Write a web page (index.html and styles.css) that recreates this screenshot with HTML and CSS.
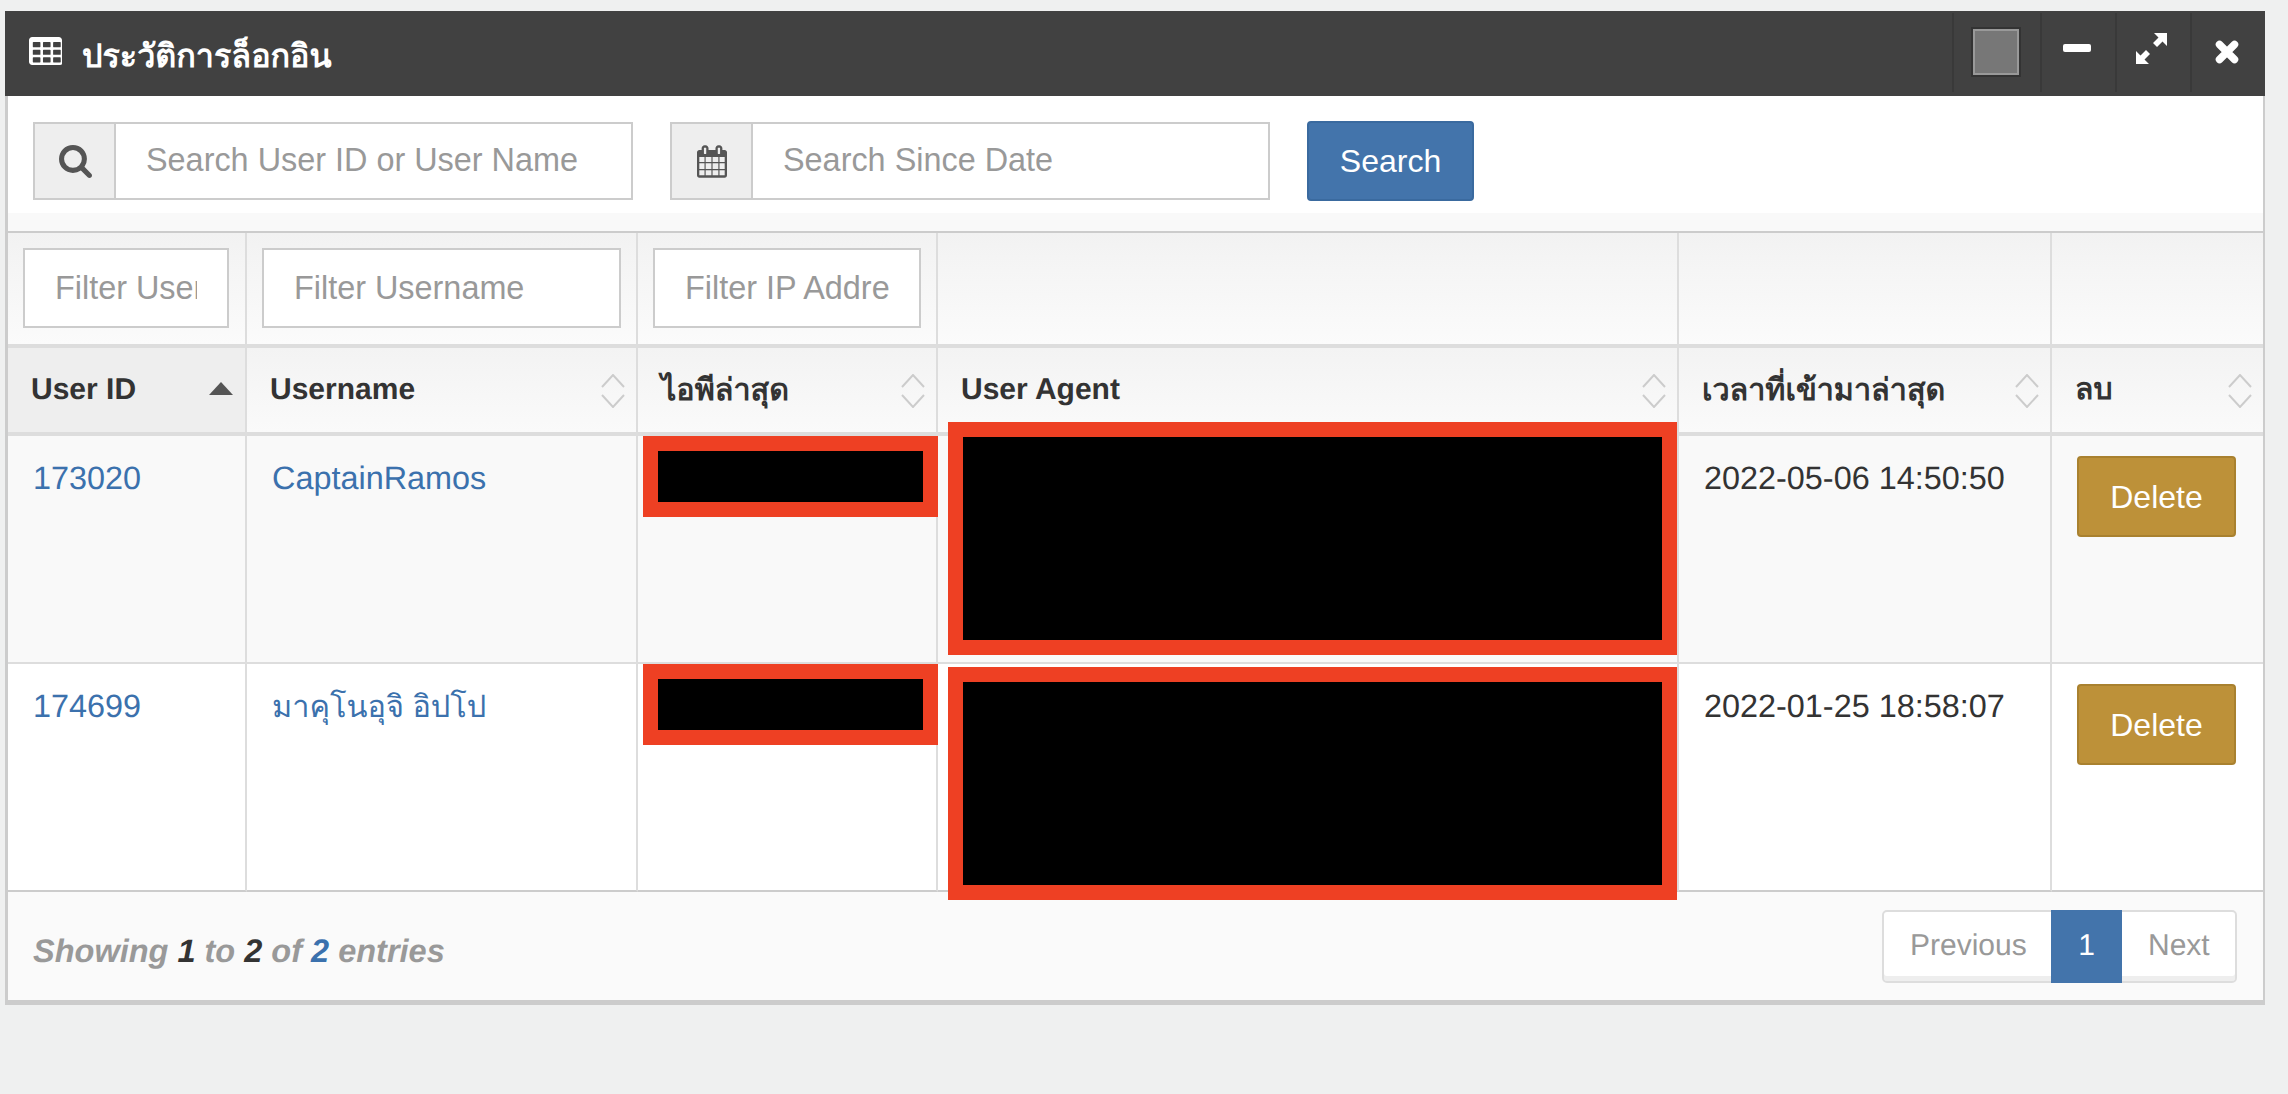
FILE: index.html
```html
<!DOCTYPE html>
<html lang="th">
<head>
<meta charset="utf-8">
<title>ประวัติการล็อกอิน</title>
<link rel="stylesheet" href="styles.css">
</head>
<body>
<section class="window">
  <header class="titlebar">
    <svg class="title-icon" viewBox="0 128 1664 1408"><path d="M576 1376v-192q0-14-9-23t-23-9H224q-14 0-23 9t-9 23v192q0 14 9 23t23 9h320q14 0 23-9t9-23zm0-384V800q0-14-9-23t-23-9H224q-14 0-23 9t-9 23v192q0 14 9 23t23 9h320q14 0 23-9t9-23zm512 384v-192q0-14-9-23t-23-9H736q-14 0-23 9t-9 23v192q0 14 9 23t23 9h320q14 0 23-9t9-23zM576 608V416q0-14-9-23t-23-9H224q-14 0-23 9t-9 23v192q0 14 9 23t23 9h320q14 0 23-9t9-23zm512 384V800q0-14-9-23t-23-9H736q-14 0-23 9t-9 23v192q0 14 9 23t23 9h320q14 0 23-9t9-23zm512 384v-192q0-14-9-23t-23-9h-320q-14 0-23 9t-9 23v192q0 14 9 23t23 9h320q14 0 23-9t9-23zm-512-768V416q0-14-9-23t-23-9H736q-14 0-23 9t-9 23v192q0 14 9 23t23 9h320q14 0 23-9t9-23zm512 384V800q0-14-9-23t-23-9h-320q-14 0-23 9t-9 23v192q0 14 9 23t23 9h320q14 0 23-9t9-23zm0-384V416q0-14-9-23t-23-9h-320q-14 0-23 9t-9 23v192q0 14 9 23t23 9h320q14 0 23-9t9-23zm128-320v1088q0 66-47 113t-113 47H160q-66 0-113-47T0 1376V288q0-66 47-113t113-47h1344q66 0 113 47t47 113z"/></svg>
    <h1 class="title">ประวัติการล็อกอิน</h1>
    <div class="tools">
      <div class="tool tool-swatch"><span class="swatch"></span></div>
      <div class="tool"><svg class="ic-min" viewBox="0 0 28 8"><rect width="28" height="8" rx="2"/></svg></div>
      <div class="tool"><svg class="ic-exp" viewBox="0 0 31 31"><path d="M18 0h13v13l-4.500-4.500L21 14l-4-4 5.500-5.500zM0 31V18l4.500 4.500L10 17l4 4-5.500 5.500L13 31z"/></svg></div>
      <div class="tool"><svg class="ic-close" viewBox="0 0 24 24"><path d="M4.500 4.500l15 15M19.500 4.500l-15 15"/></svg></div>
    </div>
  </header>
  <div class="content">
    <form class="toolbar">
      <div class="field">
        <span class="addon"><svg class="ic-search" viewBox="0 0 1664 1664"><path d="M1152 704q0-185-131.500-316.500T704 256 387.500 387.500 256 704t131.500 316.500T704 1152t316.500-131.500T1152 704zm512 832q0 52-38 90t-90 38q-54 0-90-38l-343-342q-179 124-399 124-143 0-273.500-55.500t-225-150-150-225T0 704t55.500-273.500 150-225 225-150T704 0t273.500 55.500 225 150 150 225T1408 704q0 220-124 399l343 343q37 37 37 90z"/></svg></span>
        <input class="field-input" placeholder="Search User ID or User Name">
      </div>
      <div class="field">
        <span class="addon"><svg class="ic-cal" viewBox="0 0 1664 1792"><path d="M128 1664h288v-288H128v288zm352 0h320v-288H480v288zm-352-352h288V992H128v320zm352 0h320V992H480v320zM128 928h288V640H128v288zm736 736h320v-288H864v288zM480 928h320V640H480v288zm768 736h288v-288h-288v288zm-384-352h320V992H864v320zM512 448V160q0-13-9.500-22.500T480 128h-64q-13 0-22.500 9.500T384 160v288q0 13 9.500 22.500T416 480h64q13 0 22.500-9.500T512 448zm736 864h288V992h-288v320zM864 928h320V640H864v288zm384 0h288V640h-288v288zm32-480V160q0-13-9.500-22.500T1248 128h-64q-13 0-22.500 9.500T1152 160v288q0 13 9.500 22.500t22.500 9.500h64q13 0 22.500-9.500t9.500-22.500zm384-64v1280q0 52-38 90t-90 38H128q-52 0-90-38t-38-90V384q0-52 38-90t90-38h128v-96q0-66 47-113T416 0h64q66 0 113 47t47 113v96h384v-96q0-66 47-113t113-47h64q66 0 113 47t47 113v96h128q52 0 90 38t38 90z"/></svg></span>
        <input class="field-input" placeholder="Search Since Date">
      </div>
      <button class="btn btn-search" type="button">Search</button>
    </form>
    <div class="strip"></div>
    <table class="grid">
      <colgroup>
        <col class="c1"><col class="c2"><col class="c3"><col class="c4"><col class="c5"><col class="c6">
      </colgroup>
      <thead>
        <tr class="filters">
          <td><input class="filter" placeholder="Filter User ID"></td>
          <td><input class="filter" placeholder="Filter Username"></td>
          <td><input class="filter" placeholder="Filter IP Address"></td>
          <td></td><td></td><td></td>
        </tr>
        <tr class="heads">
          <th class="sorted"><span>User ID</span><svg class="sort" viewBox="0 0 24 14"><path class="tri" d="M12 0l12 13H0z"/></svg></th>
          <th><span>Username</span><svg class="sort" viewBox="0 0 24 34"><path d="M1 13L12 1l11 12M1 21l11 12 11-12"/></svg></th>
          <th><span class="thai">ไอพีล่าสุด</span><svg class="sort" viewBox="0 0 24 34"><path d="M1 13L12 1l11 12M1 21l11 12 11-12"/></svg></th>
          <th><span>User Agent</span><svg class="sort" viewBox="0 0 24 34"><path d="M1 13L12 1l11 12M1 21l11 12 11-12"/></svg></th>
          <th><span class="thai">เวลาที่เข้ามาล่าสุด</span><svg class="sort" viewBox="0 0 24 34"><path d="M1 13L12 1l11 12M1 21l11 12 11-12"/></svg></th>
          <th><span>ลบ</span><svg class="sort" viewBox="0 0 24 34"><path d="M1 13L12 1l11 12M1 21l11 12 11-12"/></svg></th>
        </tr>
      </thead>
      <tbody>
        <tr class="odd">
          <td><a href="#">173020</a></td>
          <td><a href="#">CaptainRamos</a></td>
          <td class="masked"><i class="mask mask-ip mask-ip-a"></i></td>
          <td class="masked"><i class="mask mask-ua mask-ua-a"></i></td>
          <td>2022-05-06 14:50:50</td>
          <td class="act"><button class="btn btn-del" type="button">Delete</button></td>
        </tr>
        <tr>
          <td><a href="#">174699</a></td>
          <td><a href="#" class="thai-link">มาคุโนอุจิ อิปโป</a></td>
          <td class="masked"><i class="mask mask-ip mask-ip-b"></i></td>
          <td class="masked"><i class="mask mask-ua mask-ua-b"></i></td>
          <td>2022-01-25 18:58:07</td>
          <td class="act"><button class="btn btn-del" type="button">Delete</button></td>
        </tr>
      </tbody>
    </table>
    <footer class="foot">
      <p class="info">Showing <b>1</b> to <b>2</b> of <b class="total">2</b> entries</p>
      <nav class="pager">
        <a href="#" class="prev">Previous</a><a href="#" class="on">1</a><a href="#" class="next">Next</a>
      </nav>
    </footer>
  </div>
</section>
</body>
</html>
```
FILE: styles.css
```css
* { box-sizing: border-box; }
html, body { margin: 0; height: 100%; }
body {
  background: #eff0f0;
  font-family: "Liberation Sans", "Noto Sans", sans-serif;
  font-size: 32px;
  color: #333;
  overflow: hidden;
  text-rendering: geometricPrecision;
}
.window { width: 2260px; margin: 11px 0 0 5px; }

.titlebar { height: 85px; background: #414141; display: flex; align-items: center; color: #fff; }
.title-icon { width: 33px; height: 28px; margin: 0 0 5px 24px; fill: #fff; flex: none; }
.title { margin: 5px 0 0 20px; font-size: 32.300px; font-weight: 700; line-height: 1; }
.tools { margin-left: auto; display: flex; align-self: stretch; padding: 2px 0 4px; }
.tool { width: 75px; display: flex; align-items: center; justify-content: center; border-left: 2px solid #393939; }
.tool-swatch { width: 88px; }
.swatch { width: 46px; height: 46px; background: #777; border: 2px solid #999; outline: 2px solid #333; margin: -1px 0 0 -3px; }
.ic-min { width: 28px; height: 8px; fill: #fff; margin: -10px 0 0 -4px; }
.ic-exp { width: 31px; height: 31px; fill: #fff; margin: -9px 0 0 -5px; }
.ic-close { width: 24px; height: 24px; fill: none; stroke: #fff; stroke-width: 7.500; stroke-linecap: round; margin: -2px 0 0 -4px; }

.content { border: solid #ccc; border-width: 0 2px 5px 3px; background: #fff; }
.toolbar { height: 117px; padding: 25px 0 0 25px; display: flex; gap: 37px; align-items: flex-start; }
.field { width: 600px; height: 78px; display: flex; margin-top: 1px; border: 2px solid #ccc; }
.addon { width: 81px; background: #eee; border-right: 2px solid #ccc; display: flex; align-items: center; justify-content: center; flex: none; }
.ic-search { width: 33px; height: 33px; fill: #555; margin-left: 2px; }
.ic-cal { width: 30px; height: 33px; fill: #555; margin-left: 1px; }
.field-input { flex: 1; min-width: 0; border: 0; outline: 0; padding: 0 30px 2px; font: inherit; font-size: 32.400px; background: #fff; }
input::placeholder { color: #999; opacity: 1; }
.btn { font: inherit; color: #fff; border: 2px solid; border-radius: 4px; padding: 0; }
.btn-search { width: 167px; height: 80px; background: #4374ab; border-color: #3a6a9f; }
.strip { height: 18px; background: #f9f9f9; }

.grid { width: 2255px; table-layout: fixed; border-collapse: separate; border-spacing: 0; border-top: 2px solid #ccc; }
.c1 { width: 239px; } .c2 { width: 391px; } .c3 { width: 300px; }
.c4 { width: 741px; } .c5 { width: 373px; } .c6 { width: 211px; }
.grid td, .grid th { border-right: 2px solid #ddd; }
.grid tr > :last-child { border-right: 0; }
.filters td { height: 115px; padding: 15px 15px 0; vertical-align: top; background: linear-gradient(#f2f2f2, #fbfbfb); border-bottom: 4px solid #ddd; }
.filters td:first-child { padding-right: 16px; }
.filter { display: block; width: 100%; height: 80px; border: 2px solid #ccc; background: #fff; font: inherit; font-size: 32.400px; padding: 0 30px; outline: 0; }
.heads th { position: relative; height: 88px; text-align: left; font-size: 30px; font-weight: 700; line-height: 34px; padding: 0 13px 0 23px; background: linear-gradient(#f3f3f3, #fafafa); border-bottom: 4px solid #ddd; white-space: nowrap; }
.heads th.sorted { background: #eee; }
.thai { font-size: 30.500px; }
.sort { position: absolute; right: 11px; top: 26px; width: 24px; height: 34px; fill: none; stroke: #ccc; stroke-width: 2; }
.sorted .sort { height: 14px; top: 34px; right: 12px; }
.tri { fill: #555; stroke: none; }

tbody td { height: 228px; vertical-align: top; padding: 19px 24px 0 25px; font-size: 32.400px; line-height: 46px; border-bottom: 2px solid #ddd; }
tbody tr:last-child td { border-bottom-color: #ccc; }
.odd td { background: #f9f9f9; }
tbody a { color: #3b71ad; text-decoration: none; }
.thai-link { font-size: 30.700px; }
.grid td.masked { position: relative; padding: 0; }
.mask { position: absolute; display: block; background: #000; border: 15px solid #ee4023; }
.mask-ip { left: 5px; right: -2px; height: 81px; top: 0; }
.mask-ua { left: 10px; right: 0; }
.mask-ua-a { top: -14px; height: 233px; }
.mask-ua-b { top: 3px; height: 233px; }
.grid td.act { padding: 20px 28px 0 25px; }
.btn-del { display: block; width: 159px; height: 81px; background: #bd9139; border-color: #a9812f; font-size: 32px; }

.foot { height: 108px; background: #fafafa; display: flex; justify-content: space-between; align-items: flex-start; padding: 0 26px 0 25px; }
.info { margin: 39px 0 0; font-size: 32.500px; font-style: italic; font-weight: 700; color: #999; line-height: 40px; }
.info b { color: #333; }
.info .total { color: #3b71ad; }
.pager { margin-top: 18px; height: 73px; display: flex; font-size: 30px; background: #fff; border: 2px solid #ddd; border-radius: 5px; box-shadow: inset 0 -5px 0 #eee; }
.pager a { color: #999; text-decoration: none; line-height: 68px; }
.pager .prev { width: 167px; padding-left: 26px; }
.pager .next { width: 113px; padding-left: 26px; }
.pager .on { background: #4374ab; color: #fff; width: 71px; margin: -2px 0; text-align: center; line-height: 72px; }
```
